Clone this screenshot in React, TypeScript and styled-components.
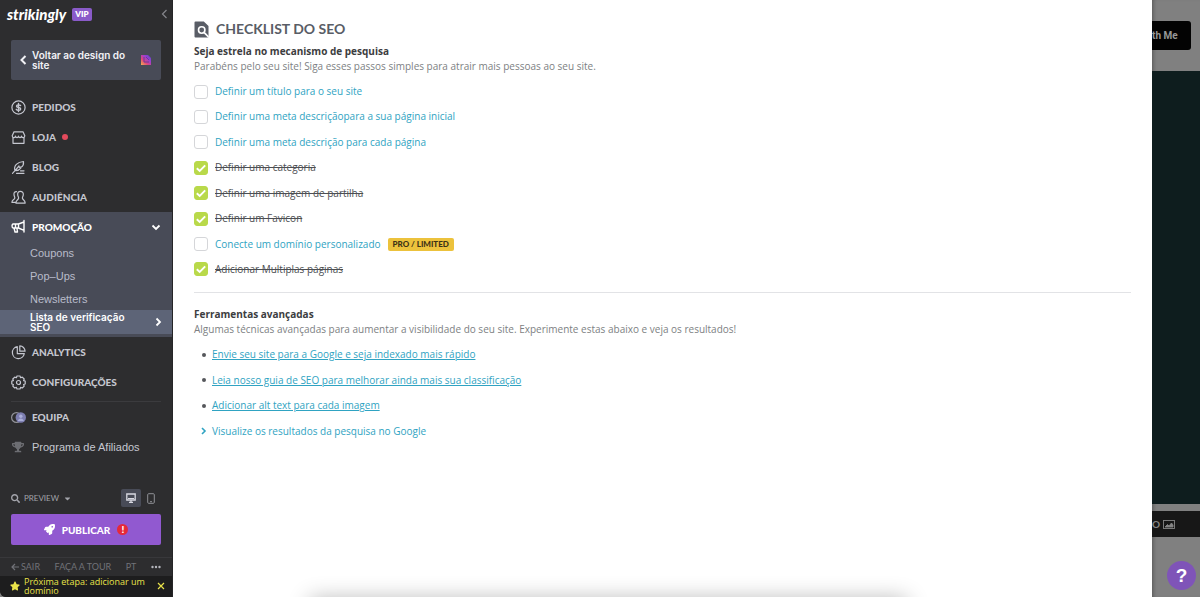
import React from "react";
import styled, { createGlobalStyle, css } from "styled-components";
import { FaSearch, FaRocket, FaStar, FaTrophy, FaCaretDown } from "react-icons/fa";

const sans = `"Liberation Sans", Arial, sans-serif`;
const body = `"Open Sans", "Noto Sans", sans-serif`;
const display = `Lato, "Open Sans", sans-serif`;

const GlobalStyle = createGlobalStyle`
  * { box-sizing: border-box; }
  body { margin: 0; font-family: ${body}; font-size: 10px; background: #808080; }
  button { font: inherit; color: inherit; background: none; border: 0; padding: 0; cursor: pointer; }
  a { color: inherit; text-decoration: none; }
  ul, h1, h2, p { margin: 0; padding: 0; }
  ul { list-style: none; }
  svg { display: block; flex: none; }
`;

const Page = styled.div`
  display: grid;
  grid-template-columns: 173px minmax(0, 1fr) 48px;
  min-height: 100vh;
`;

/* ---------- Sidebar ---------- */

const Sidebar = styled.aside`
  display: flex;
  flex-direction: column;
  background: #2d2d2f;
  color: #c5c7d0;
  border-right: 1px solid #252527;
  border-bottom-left-radius: 6px;
`;

const Brand = styled.header`
  display: flex;
  align-items: center;
  height: 28px;
  padding: 0 2px 0 7px;
  gap: 6px;
`;

const Logo = styled.a`
  color: #fff;
  font: italic 900 15px/20px ${display};
`;

const VipTag = styled.span`
  background: #8a5bc9;
  color: #fff;
  border-radius: 2px;
  padding: 0 3px;
  font: 800 8px/13px ${display};
`;

const Collapse = styled.button`
  margin-left: auto;
  color: #85868c;
`;

const BackButton = styled.button`
  display: flex;
  align-items: center;
  gap: 3px;
  height: 40px;
  margin: 12px 11px;
  padding: 0 9px 0 8px;
  border-radius: 2px;
  background: #484b57;
  color: #f2f2f6;
  font: 600 10px/10px Inter, ${sans};
  text-align: left;

  span { flex: 1; }
`;

const Nav = styled.nav`
  display: flex;
  flex-direction: column;
`;

const NavItem = styled.a<{ $active?: boolean; $plain?: boolean }>`
  display: flex;
  align-items: center;
  gap: 6px;
  height: ${(p) => (p.$active ? 29 : 30)}px;
  padding: 0 11px;
  color: ${(p) => (p.$active ? "#fff" : "#c5c7d0")};
  font: ${(p) => (p.$plain ? `400 11px/14px ${sans}` : `900 10px/14px ${display}`)};

  > svg:last-child:not(:first-child) { margin-left: auto; }
`;

const RedDot = styled.i`
  width: 6px;
  height: 6px;
  border-radius: 50%;
  background: #e34a5c;
`;

const OpenSection = styled.div`
  background: #484b57;
  padding-bottom: 3px;
`;

const SubItem = styled.a<{ $active?: boolean }>`
  display: flex;
  align-items: center;
  justify-content: space-between;
  height: 23px;
  padding: 0 9px 0 30px;
  color: #b9bcca;
  font: 400 11px/10px ${sans};

  span { max-width: 112px; }
  ${(p) =>
    p.$active &&
    css`
      height: 24px;
      background: #5d6477;
      color: #fff;
      font: 600 10px/10px Inter, ${sans};
    `}
`;

const Divider = styled.hr`
  width: calc(100% - 22px);
  margin: 4px 11px 0;
  border: 0;
  border-top: 1px solid #3b3b3e;
`;

const Bottom = styled.div`
  margin-top: auto;
`;

const PreviewBar = styled.div`
  display: flex;
  align-items: center;
  height: 20px;
  padding: 0 11px;
  color: #a2a3aa;
  font: 400 8px/12px ${display};
`;

const PreviewMenu = styled.button`
  display: flex;
  align-items: center;
  gap: 4px;
  margin-right: auto;
`;

const Device = styled.button<{ $on?: boolean }>`
  display: grid;
  place-items: center;
  width: 20px;
  height: 18px;
  border-radius: 2px;
  color: ${(p) => (p.$on ? "#d8d9e2" : "#8f9096")};
  background: ${(p) => (p.$on ? "#484b57" : "transparent")};
`;

const Publish = styled.button`
  display: flex;
  align-items: center;
  justify-content: center;
  gap: 7px;
  width: calc(100% - 22px);
  height: 31px;
  margin: 6px 11px 12px;
  border-radius: 2px;
  background: #9159d0;
  color: #fff;
  font: 900 10px/14px ${display};
`;

const Alert = styled.span`
  width: 11px;
  height: 11px;
  border-radius: 50%;
  background: #e5293a;
  font: 900 10px/11px ${display};
`;

const FooterLinks = styled.div`
  display: flex;
  align-items: center;
  justify-content: space-between;
  height: 19px;
  padding: 0 11px;
  border-top: 1px solid #38383b;
  color: #717278;
  font: 400 9px/12px ${display};

  a { display: flex; align-items: center; gap: 2px; }
`;

const NextStep = styled.div`
  display: flex;
  align-items: center;
  gap: 4px;
  height: 21px;
  padding: 0 7px 2px 10px;
  border-bottom-left-radius: 6px;
  background: #1d1d1e;
  color: #e9e34a;
  font: 400 9px/9px ${body};

  a { flex: 1; }
`;

/* ---------- Checklist ---------- */

const Main = styled.main`
  position: relative;
  overflow: hidden;
  padding: 18px 21px 0;
  background: #fff;
  color: #7d7f83;

  &::after {
    content: "";
    position: absolute;
    left: 14%;
    right: 25%;
    bottom: -20px;
    height: 20px;
    box-shadow: 0 2px 22px rgba(0, 0, 0, 0.3);
  }
`;

const Title = styled.h1`
  display: flex;
  align-items: center;
  gap: 7px;
  color: #595d66;
  font: 700 14px/22px ${display};
`;

const Heading = styled.h2`
  margin-top: 4px;
  color: #3c3d40;
  font: 700 10px/15px ${body};
`;

const Intro = styled.p`
  font: 400 10px/15px ${body};
`;

const Checklist = styled.ul`
  display: flex;
  flex-direction: column;
  justify-content: space-between;
  min-height: 193px;
  margin-top: 10px;
`;

const Task = styled.li`
  display: flex;
  align-items: center;
  gap: 7px;
  line-height: 15px;
`;

const BoxWrap = styled.span`
  display: grid;
  place-items: center;

  > * { grid-area: 1 / 1; }
  svg { pointer-events: none; }
`;

const Box = styled.input`
  appearance: none;
  width: 14px;
  height: 14px;
  margin: 0;
  border: 1px solid #d5d6d9;
  border-radius: 3px;
  background: #fff;

  &:checked {
    border-color: #b9d94a;
    background: #b9d94a;
  }
`;

const TaskLabel = styled.label<{ $done?: boolean }>`
  color: ${(p) => (p.$done ? "#4d4f53" : "#2fa3c2")};
  text-decoration: ${(p) => (p.$done ? "line-through" : "none")};
`;

const ProTag = styled.span`
  padding: 0 5px;
  border-radius: 2px;
  background: #ecc23c;
  color: #3d3316;
  font: 900 8px/13px ${display};
`;

const Rule = styled.hr`
  margin: 15px 0 14px;
  border: 0;
  border-top: 1px solid #e2e3e6;
`;

const Tools = styled.ul`
  display: flex;
  flex-direction: column;
  justify-content: space-between;
  min-height: 92px;
  margin-top: 10px;
`;

const Tool = styled.li<{ $more?: boolean }>`
  display: flex;
  align-items: center;
  line-height: 15px;
  color: #2fa3c2;

  a { text-decoration: ${(p) => (p.$more ? "none" : "underline")}; }
`;

const Marker = styled.span`
  display: grid;
  place-items: center;
  width: 18px;
  padding-left: 2px;
  color: #4d4f53;
`;

const Bullet = styled.i`
  width: 4px;
  height: 4px;
  border-radius: 50%;
  background: #55575b;
`;

/* ---------- Dimmed site behind the panel ---------- */

const Site = styled.aside`
  position: relative;
  display: flex;
  flex-direction: column;
  overflow: hidden;
  background: #808080;
  box-shadow: inset 4px 0 4px -3px rgba(0, 0, 0, 0.35);
`;

const SiteHeader = styled.div`
  display: flex;
  padding: 21px 10px 21px 0;
`;

const SiteButton = styled.button`
  flex: 1;
  height: 29px;
  padding-right: 13px;
  border-radius: 0 3px 3px 0;
  background: #030303;
  color: #979797;
  text-align: right;
  white-space: nowrap;
  font: 700 10px/14px Roboto, ${sans};
`;

const Hero = styled.div`
  flex: 1;
  background: #0e1d1e;
`;

const SiteBar = styled.div`
  display: flex;
  align-items: center;
  justify-content: flex-end;
  gap: 3px;
  height: 26px;
  margin: 7px 0 60px;
  padding-right: 25px;
  background: #171717;
  color: #858585;
  font: 700 10px/14px ${display};
`;

const Help = styled.button`
  position: absolute;
  right: 4px;
  bottom: 7px;
  width: 29px;
  height: 29px;
  border-radius: 50%;
  background: #7f54b8;
  color: #fff;
  font: 700 19px/29px ${sans};
`;

/* ---------- Icons ---------- */

const chevrons = {
  left: "M6.5 1 2.500 5l4 4",
  right: "M3.500 1.500 7 5 3.500 8.500",
  down: "M1.500 3.500 5 7l3.500-3.500",
};

const Chevron = ({ d, size = 10, width = 1.6 }: { d: keyof typeof chevrons; size?: number; width?: number }) => (
  <svg width={size} height={size} viewBox="0 0 10 10" fill="none" stroke="currentColor" strokeWidth={width}>
    <path d={chevrons[d]} />
  </svg>
);

const Line = ({ children }: { children: React.ReactNode }) => (
  <svg width="15" height="15" viewBox="0 0 15 15" fill="none" stroke="currentColor" strokeWidth="1.2" strokeLinecap="round" strokeLinejoin="round">
    {children}
  </svg>
);

const DollarIcon = () => (
  <Line>
    <circle cx="7.5" cy="7.5" r="6.6" />
    <path d="M9.600 5.600C9 4.600 5.500 4.400 5.500 6.200c0 1.700 4.200.9 4.200 2.700 0 1.700-3.600 1.600-4.400.4M7.500 3.500v8" strokeWidth="1.4" />
  </Line>
);
const StoreIcon = () => (
  <Line>
    <path d="M3 1.800h9l1.800 4c0 2.300-3 2.500-3.300.4-.3 1.900-2.700 1.900-3 0-.3 1.900-2.700 1.900-3 0-.3 2.100-3.300 1.900-3.300-.4zM2 8v5.300h11V8" />
  </Line>
);
const QuillIcon = () => (
  <Line>
    <path d="M1.500 13.300 4 10.700M4 10.700C2.300 6 6.500 1.800 12.500 1.500c.2 2.600-.5 4.600-2 5.500L8.300 7.200l1.500.9C8.400 10 6.300 10.800 4 10.700L8 6M5.500 13.300h7.500M9.500 10.800h3.500" />
  </Line>
);
const PeopleIcon = () => (
  <Line>
    <path d="M5.500 1.600c-2 0-2.700 1.300-2.500 3 .1 1.600.8 2.300.8 3.400C3.800 9.600 1 9.600.9 12.300H5M9.300 1.300c-2 0-2.800 1.500-2.600 3.400.1 1.500.9 2.200.9 3.400-.1 1.800-2.600 1.700-2.700 5h9.300c-.1-3.300-2.700-3.200-2.800-5 0-1.200.8-1.900.9-3.400.2-1.900-.8-3.400-3-3.400z" />
  </Line>
);
const MegaphoneIcon = () => (
  <Line>
    <path d="M13 1.500v11.500M13 3 7.500 5H2.200C.7 5 .7 9 2.200 9h5.300l5.500 2.300M7.500 5v4M3 9l1 4h2.500l-.6-4M4.500 5v4" strokeWidth="1.4" />
  </Line>
);
const PieIcon = () => (
  <Line>
    <path d="M6.300 1.700a6 6 0 1 0 7 7h-7zM8.800.9v5.300h5.300C14 3.300 11.700.9 8.800.9z" />
  </Line>
);
const GearIcon = () => (
  <Line>
    <path d="M6 1h3l.6 1.700 1.700-.6 1.900 1.900-.6 1.700L14.200 6v3l-1.600.5.600 1.600-1.900 1.900-1.700-.6L9 14H6l-.6-1.600-1.700.6-1.900-1.900.6-1.600L.8 9V6l1.600-.3L1.800 4l1.900-1.900 1.700.6z" />
    <circle cx="7.5" cy="7.5" r="2" />
  </Line>
);
const TeamIcon = () => (
  <svg width="15" height="13" viewBox="0 0 15 13">
    <circle cx="5.500" cy="6.500" r="4.900" fill="none" stroke="#92939a" strokeWidth="1.2" />
    <circle cx="9.800" cy="6.500" r="5.200" fill="#7d7eb0" />
    <circle cx="9.800" cy="5.300" r="1.700" fill="#aaaed8" />
    <path d="M6.800 10c.4-3.400 5.500-3.400 6 0z" fill="#aaaed8" />
  </svg>
);
const SiteThumb = () => (
  <svg width="12" height="12" viewBox="0 0 12 12">
    <defs>
      <linearGradient id="thumb" x1="0" y1="1" x2="1" y2="0">
        <stop offset="0" stopColor="#f2b34d" />
        <stop offset=".35" stopColor="#e0467c" />
        <stop offset=".65" stopColor="#9a3fd0" />
        <stop offset="1" stopColor="#5148c8" />
      </linearGradient>
    </defs>
    <path d="M1 1h7l3 3v7H1z" fill="url(#thumb)" />
    <path d="M4 3v5h5M6 3l3 3" stroke="#6a3a9a" strokeWidth="1" fill="none" />
  </svg>
);
const PageSearchIcon = () => (
  <svg width="15" height="17" viewBox="0 0 15 17">
    <path d="M1.500.5h8.300L14.500 5v10.500a1 1 0 0 1-1 1h-12a1 1 0 0 1-1-1v-14a1 1 0 0 1 1-1z" fill="#595d66" />
    <circle cx="7.700" cy="9" r="3.200" fill="none" stroke="#fff" strokeWidth="1.600" />
    <path d="m10 11.300 4.500 4.700" stroke="#fff" strokeWidth="1.700" />
  </svg>
);

/* ---------- Data ---------- */

const tasks = [
  { text: "Definir um título para o seu site" },
  { text: "Definir uma meta descriçãopara a sua página inicial" },
  { text: "Definir uma meta descrição para cada página" },
  { text: "Definir uma categoria", done: true },
  { text: "Definir uma imagem de partilha", done: true },
  { text: "Definir um Favicon", done: true },
  { text: "Conecte um domínio personalizado", tag: "PRO / LIMITED" },
  { text: "Adicionar Multiplas páginas", done: true },
];

const tools = [
  "Envie seu site para a Google e seja indexado mais rápido",
  "Leia nosso guia de SEO para melhorar ainda mais sua classificação",
  "Adicionar alt text para cada imagem",
];

export default function App() {
  return (
    <Page>
      <GlobalStyle />
      <Sidebar>
        <Brand>
          <Logo href="#">strikingly</Logo>
          <VipTag>VIP</VipTag>
          <Collapse aria-label="Recolher menu"><Chevron d="left" width={1.2} /></Collapse>
        </Brand>
        <BackButton>
          <Chevron d="left" width={2} />
          <span>Voltar ao design do site</span>
          <SiteThumb />
        </BackButton>
        <Nav>
          <NavItem href="#"><DollarIcon />PEDIDOS</NavItem>
          <NavItem href="#"><StoreIcon />LOJA<RedDot /></NavItem>
          <NavItem href="#"><QuillIcon />BLOG</NavItem>
          <NavItem href="#"><PeopleIcon />AUDIÊNCIA</NavItem>
          <OpenSection>
            <NavItem href="#" $active><MegaphoneIcon />PROMOÇÃO<Chevron d="down" width={1.8} /></NavItem>
            <SubItem href="#">Coupons</SubItem>
            <SubItem href="#">Pop–Ups</SubItem>
            <SubItem href="#">Newsletters</SubItem>
            <SubItem href="#" $active><span>Lista de verificação SEO</span><Chevron d="right" width={1.8} /></SubItem>
          </OpenSection>
          <NavItem href="#"><PieIcon />ANALYTICS</NavItem>
          <NavItem href="#"><GearIcon />CONFIGURAÇÕES</NavItem>
          <Divider />
          <NavItem href="#"><TeamIcon />EQUIPA</NavItem>
          <NavItem href="#" $plain>
            <svg width="15" height="12" viewBox="0 0 15 12"><FaTrophy size={12} x={1} color="#6c6d72" /></svg>
            Programa de Afiliados
          </NavItem>
        </Nav>
        <Bottom>
          <PreviewBar>
            <PreviewMenu><FaSearch size={9} />PREVIEW<FaCaretDown size={9} /></PreviewMenu>
            <Device $on aria-label="Computador">
              <svg width="10" height="10" viewBox="0 0 10 10" fill="none" stroke="currentColor">
                <path d="M.8 1h8.400v6H.8zM3 9.300h4M5 7v2" strokeWidth="1.3" />
                <path d="M2 5.500h6" />
              </svg>
            </Device>
            <Device aria-label="Celular">
              <svg width="8" height="11" viewBox="0 0 8 11" fill="none" stroke="currentColor">
                <rect x=".7" y=".7" width="6.6" height="9.6" rx="1" />
                <path d="M3 8.700h2" />
              </svg>
            </Device>
          </PreviewBar>
          <Publish><FaRocket size={11} />PUBLICAR<Alert>!</Alert></Publish>
          <FooterLinks>
            <a href="#">
              <svg width="8" height="8" viewBox="0 0 8 8" fill="none" stroke="currentColor" strokeWidth="1.2"><path d="M8 4H1M4 1 1 4l3 3" /></svg>
              SAIR
            </a>
            <a href="#">FAÇA A TOUR</a>
            <a href="#">PT</a>
            <a href="#" aria-label="Mais">
              <svg width="10" height="4" viewBox="0 0 10 4" fill="#b5b6bd"><circle cx="1.500" cy="2" r="1.2" /><circle cx="5" cy="2" r="1.2" /><circle cx="8.500" cy="2" r="1.2" /></svg>
            </a>
          </FooterLinks>
          <NextStep>
            <FaStar size={10} />
            <a href="#">Próxima etapa: adicionar um domínio</a>
            <button aria-label="Fechar">
              <svg width="8" height="8" viewBox="0 0 8 8" stroke="currentColor" strokeWidth="1.2"><path d="m1 1 6 6M7 1 1 7" /></svg>
            </button>
          </NextStep>
        </Bottom>
      </Sidebar>

      <Main>
        <Title><PageSearchIcon />CHECKLIST DO SEO</Title>
        <Heading>Seja estrela no mecanismo de pesquisa</Heading>
        <Intro>Parabéns pelo seu site! Siga esses passos simples para atrair mais pessoas ao seu site.</Intro>
        <Checklist>
          {tasks.map((t, i) => (
            <Task key={t.text}>
              <BoxWrap>
                <Box type="checkbox" id={`task-${i}`} checked={!!t.done} readOnly />
                {t.done && (
                  <svg width="10" height="10" viewBox="0 0 10 10" fill="none" stroke="#fff" strokeWidth="1.9"><path d="M.8 5.200 3.700 8 9.200 2.300" /></svg>
                )}
              </BoxWrap>
              <TaskLabel htmlFor={`task-${i}`} $done={t.done}>{t.text}</TaskLabel>
              {t.tag && <ProTag>{t.tag}</ProTag>}
            </Task>
          ))}
        </Checklist>
        <Rule />
        <Heading>Ferramentas avançadas</Heading>
        <Intro>Algumas técnicas avançadas para aumentar a visibilidade do seu site. Experimente estas abaixo e veja os resultados!</Intro>
        <Tools>
          {tools.map((t) => (
            <Tool key={t}><Marker><Bullet /></Marker><a href="#">{t}</a></Tool>
          ))}
          <Tool $more>
            <Marker><svg width="6" height="8" viewBox="0 0 6 8" fill="none" stroke="#2fa3c2" strokeWidth="1.6"><path d="m1 1 3 3-3 3" /></svg></Marker>
            <a href="#">Visualize os resultados da pesquisa no Google</a>
          </Tool>
        </Tools>
      </Main>

      <Site>
        <SiteHeader><SiteButton>th Me</SiteButton></SiteHeader>
        <Hero />
        <SiteBar>
          DO
          <svg width="12" height="9" viewBox="0 0 12 9" fill="none" stroke="currentColor" strokeWidth=".9">
            <rect x=".5" y=".5" width="11" height="8" />
            <path d="M2 7 4.500 4.500 6 6l2.500-3L10 5v2z" fill="currentColor" />
          </svg>
        </SiteBar>
        <Help aria-label="Ajuda">?</Help>
      </Site>
    </Page>
  );
}
